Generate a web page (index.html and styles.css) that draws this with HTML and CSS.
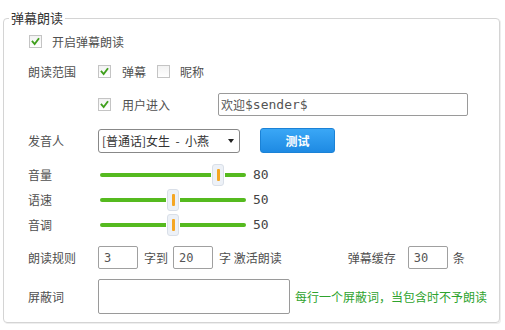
FILE: index.html
```html
<!DOCTYPE html>
<html lang="zh">
<head>
<meta charset="utf-8">
<link rel="stylesheet" href="styles.css">
</head>
<body>
<fieldset class="panel">
  <legend class="title">弹幕朗读</legend>
  <div class="content">
    <div class="row r1">
      <span class="cb on"><svg viewBox="0 0 13 13"><polyline points="3,6.5 5.5,9.5 10,3.5"/></svg></span>
      <span class="gap10">开启弹幕朗读</span>
    </div>
    <div class="row r2">
      <span class="label">朗读范围</span>
      <span class="cb on"><svg viewBox="0 0 13 13"><polyline points="3,6.5 5.5,9.5 10,3.5"/></svg></span>
      <span class="gap11">弹幕</span>
      <span class="cb gap11"></span>
      <span class="gap10">昵称</span>
    </div>
    <div class="row r3">
      <span class="label"></span>
      <span class="cb on"><svg viewBox="0 0 13 13"><polyline points="3,6.5 5.5,9.5 10,3.5"/></svg></span>
      <span class="gap11">用户进入</span>
      <span class="field welcome">欢迎<span class="mono">$sender$</span></span>
    </div>
    <div class="row r4">
      <span class="label">发音人</span>
      <span class="select">[普通话]女生 &nbsp;- &nbsp;小燕<span class="caret"></span></span>
      <span class="btn">测试</span>
    </div>
    <div class="sliders">
      <div class="row srow">
        <span class="label">音量</span>
        <span class="slider"><span class="track"></span><span class="thumb" style="left: 81%"></span></span>
        <span class="val">80</span>
      </div>
      <div class="row srow">
        <span class="label">语速</span>
        <span class="slider"><span class="track"></span><span class="thumb" style="left: 50%"></span></span>
        <span class="val">50</span>
      </div>
      <div class="row srow">
        <span class="label">音调</span>
        <span class="slider"><span class="track"></span><span class="thumb" style="left: 50%"></span></span>
        <span class="val">50</span>
      </div>
    </div>
    <div class="row r5">
      <span class="label">朗读规则</span>
      <span class="field num">3</span>
      <span class="t1">字到</span>
      <span class="field num">20</span>
      <span class="t2">字 激活朗读</span>
      <span class="t3">弹幕缓存</span>
      <span class="field num n3">30</span>
      <span class="t4">条</span>
    </div>
    <div class="row r6">
      <span class="label">屏蔽词</span>
      <span class="field area"></span>
      <span class="hint">每行一个屏蔽词，当包含时不予朗读</span>
    </div>
  </div>
</fieldset>
</body>
</html>
```
FILE: styles.css
```css
* { box-sizing: border-box; }
html, body { margin: 0; padding: 0; background: #fff; }
body {
  width: 505px;
  height: 330px;
  overflow: hidden;
  font-family: "Noto Sans CJK SC", "Noto Sans", sans-serif;
  font-size: 12px;
  color: #505050;
}
.panel {
  margin: 10px 0 0 3px;
  width: 497px;
  height: 313px;
  border: 1px solid #d4d4d4;
  border-radius: 4px;
  padding: 0;
  box-shadow: 1px 1px 0 #eee;
}
.title {
  margin-left: 5px;
  padding: 0 2px;
  font-size: 13px;
  line-height: 16px;
  color: #333;
}
.content { padding: 4px 0 0 24px; }
.row { display: flex; align-items: center; white-space: nowrap; }
.label { width: 70px; flex: none; }
.r1 { height: 22px; padding-left: 1px; }
.r2 { height: 22px; margin-top: 8px; }
.r3 { height: 23px; margin-top: 11px; }
.r4 { height: 25px; margin-top: 12px; }
.sliders { margin-top: 9px; }
.srow { height: 25px; }
.r5 { height: 23px; margin-top: 9px; }
.r6 { height: 35px; margin-top: 10px; }

.cb {
  width: 13px;
  height: 13px;
  flex: none;
  border: 1px solid #c4c4c4;
  background: linear-gradient(#f2f2f2, #fff);
  display: inline-flex;
}
.cb svg { width: 11px; height: 11px; }
.cb polyline { fill: none; stroke: #3f9f1c; stroke-width: 2.2; stroke-linecap: square; }
.gap10 { margin-left: 10px; }
.gap11 { margin-left: 11px; }

.field {
  border: 1px solid #9a9a9a;
  border-radius: 2px;
  background: #fff;
  height: 23px;
  display: inline-flex;
  align-items: center;
  flex: none;
}
.welcome {
  margin-left: 48px;
  width: 250px;
  padding-left: 2px;
  color: #555;
}
.mono { font-family: "DejaVu Sans Mono", monospace; font-size: 13px; }

.select {
  width: 142px;
  height: 24px;
  border: 1px solid #888;
  border-radius: 3px;
  display: inline-flex;
  align-items: center;
  padding-left: 3px;
  color: #333;
}
.caret {
  margin-left: auto;
  margin-right: 5px;
  width: 0;
  height: 0;
  border-left: 3.5px solid transparent;
  border-right: 3.5px solid transparent;
  border-top: 4px solid #222;
}
.btn {
  margin-left: 20px;
  width: 75px;
  height: 25px;
  border-radius: 3px;
  background: linear-gradient(#3aa7f6, #1e8ae3);
  border: 1px solid #1b82d6;
  color: #fff;
  font-weight: bold;
  display: inline-flex;
  align-items: center;
  justify-content: center;
}

.slider {
  position: relative;
  margin-left: 2px;
  width: 146px;
  height: 22px;
  display: inline-flex;
  align-items: center;
  flex: none;
}
.track {
  width: 100%;
  height: 4px;
  border-radius: 2px;
  background: #55ba1f;
}
.thumb {
  position: absolute;
  top: 0;
  width: 12px;
  height: 22px;
  transform: translateX(-50%);
  background: #edf1f7;
  border: 1px solid #d9dfe8;
  border-radius: 3px;
  box-shadow: 0 0 0 1px #fff;
}
.thumb::after {
  content: "";
  position: absolute;
  left: 3.5px;
  top: 4px;
  width: 3px;
  height: 12px;
  border-radius: 1px;
  background: #f5a623;
}
.val {
  margin-left: 7px;
  font-family: "DejaVu Sans Mono", monospace;
  font-size: 13px;
  color: #444;
}

.num {
  width: 40px;
  padding-left: 5px;
  font-family: "DejaVu Sans Mono", monospace;
  font-size: 12px;
  color: #555;
  border-color: #a0a0a0;
}
.t1 { margin: 0 5px 0 6px; }
.t2 { margin-left: 6px; }
.t3 { margin-left: 66px; }
.n3 { margin-left: 12px; }
.t4 { margin-left: 5px; }

.area { width: 192px; height: 35px; }
.hint { margin-left: 5px; color: #2ea32e; }
```
